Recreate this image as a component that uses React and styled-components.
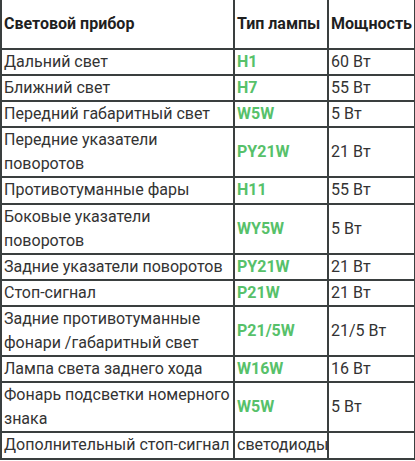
import styled, { createGlobalStyle } from "styled-components";

const GlobalStyle = createGlobalStyle`
  body {
    margin: 0;
    background: #ffffff;
    font-family: Roboto, "Liberation Sans", sans-serif;
    color: #333333;
  }
`;

const rows = [
  { name: "Дальний свет", lamp: "H1", power: "60 Вт" },
  { name: "Ближний свет", lamp: "H7", power: "55 Вт" },
  { name: "Передний габаритный свет", lamp: "W5W", power: "5 Вт" },
  { name: "Передние указатели поворотов", lamp: "PY21W", power: "21 Вт" },
  { name: "Противотуманные фары", lamp: "H11", power: "55 Вт" },
  { name: "Боковые указатели поворотов", lamp: "WY5W", power: "5 Вт" },
  { name: "Задние указатели поворотов", lamp: "PY21W", power: "21 Вт" },
  { name: "Стоп-сигнал", lamp: "P21W", power: "21 Вт" },
  {
    name: "Задние противотуманные фонари /габаритный свет",
    lamp: "P21/5W",
    power: "21/5 Вт",
  },
  { name: "Лампа света заднего хода", lamp: "W16W", power: "16 Вт" },
  { name: "Фонарь подсветки номерного знака", lamp: "W5W", power: "5 Вт" },
  { name: "Дополнительный стоп-сигнал", text: "светодиоды", power: "" },
];

const Table = styled.table`
  border-collapse: collapse;
  width: 414px;
  table-layout: fixed;
  font-size: 16px;
  line-height: 24.1px;
`;

const Col = styled.col`
  width: ${(p) => p.$w}px;
`;

const Head = styled.th`
  height: 48px;
  padding: 0 2px;
  text-align: left;
  font-weight: 700;
  color: #1f1f1f;
  border: 2px solid #3a3f3f;
  border-top: 0;
  vertical-align: middle;
  white-space: nowrap;
`;

const Cell = styled.td`
  padding: 0 2px;
  border: 2px solid #3a3f3f;
  vertical-align: middle;
  color: ${(p) => (p.$lamp ? "#57c16a" : "#333333")};
  font-weight: ${(p) => (p.$lamp ? 700 : 400)};
`;

export default function App() {
  return (
    <>
      <GlobalStyle />
      <Table>
        <colgroup>
          <Col $w={233} />
          <Col $w={94} />
          <Col $w={87} />
        </colgroup>
        <thead>
          <tr>
            <Head>Световой прибор</Head>
            <Head>Тип лампы</Head>
            <Head>Мощность</Head>
          </tr>
        </thead>
        <tbody>
          {rows.map((r) => (
            <tr key={r.name}>
              <Cell>{r.name}</Cell>
              {r.lamp ? <Cell $lamp>{r.lamp}</Cell> : <Cell>{r.text}</Cell>}
              <Cell>{r.power}</Cell>
            </tr>
          ))}
        </tbody>
      </Table>
    </>
  );
}
